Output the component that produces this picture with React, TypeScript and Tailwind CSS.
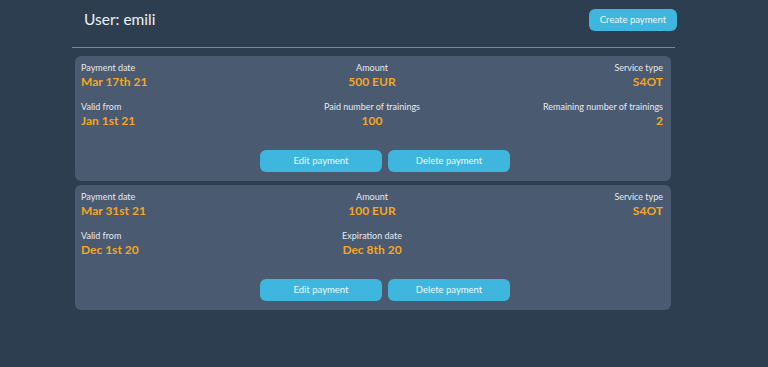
import React from "react";

type Field = { label: string; value: string };

function Col({ f, align }: { f: Field; align: "left" | "center" | "right" }) {
  const a = align === "left" ? "text-left" : align === "center" ? "text-center" : "text-right";
  return (
    <div className={a}>
      <div className="text-[9px] leading-[11px] text-[#e6e9ee]">{f.label}</div>
      <div className="text-[12px] leading-[15px] font-bold text-[#f5a623] mt-[1px]">{f.value}</div>
    </div>
  );
}

function Card({ rows }: { rows: [Field, Field | null, Field][] }) {
  return (
    <div className="ml-[75px] w-[596px] rounded-[6px] bg-[#4a5a70] pl-[6px] pr-[8px] pt-[6px] pb-[9px]">
      {rows.map((r, i) => (
        <div key={i} className={"grid grid-cols-3 " + (i > 0 ? "mt-[12px]" : "")}>
          <Col f={r[0]} align="left" />
          {r[1] ? <Col f={r[1]} align="center" /> : <div />}
          <Col f={r[2]} align="right" />
        </div>
      ))}
      <div className="flex justify-center gap-[6px] mt-[22px] ml-[26px]">
        <button className="w-[122px] h-[22px] rounded-[6px] bg-[#3fb6dd] text-[9.5px] text-[#eef8fc]">Edit payment</button>
        <button className="w-[122px] h-[22px] rounded-[6px] bg-[#3fb6dd] text-[9.5px] text-[#eef8fc]">Delete payment</button>
      </div>
    </div>
  );
}

export default function App() {
  return (
    <div className="min-h-[367px] w-full bg-[#2d3e50]" style={{ fontFamily: "Lato, 'Noto Sans', sans-serif" }}>
      <div className="ml-[84px] w-[593px] flex items-center justify-between pt-[9px]">
        <div className="text-[15.5px] text-[#eef1f4] leading-[20px] -mt-[3px]">User: emili</div>
        <button className="w-[88px] h-[22px] rounded-[6px] bg-[#3fb6dd] text-[9.5px] text-[#eef8fc]">Create payment</button>
      </div>
      <div className="ml-[72px] w-[603px] h-px bg-[#7d8896] mt-[16px]" />
      <div className="mt-[8px] flex flex-col gap-[4px]">
        <Card
          rows={[
            [
              { label: "Payment date", value: "Mar 17th 21" },
              { label: "Amount", value: "500 EUR" },
              { label: "Service type", value: "S4OT" },
            ],
            [
              { label: "Valid from", value: "Jan 1st 21" },
              { label: "Paid number of trainings", value: "100" },
              { label: "Remaining number of trainings", value: "2" },
            ],
          ]}
        />
        <Card
          rows={[
            [
              { label: "Payment date", value: "Mar 31st 21" },
              { label: "Amount", value: "100 EUR" },
              { label: "Service type", value: "S4OT" },
            ],
            [
              { label: "Valid from", value: "Dec 1st 20" },
              { label: "Expiration date", value: "Dec 8th 20" },
              { label: "", value: "" },
            ],
          ]}
        />
      </div>
    </div>
  );
}
